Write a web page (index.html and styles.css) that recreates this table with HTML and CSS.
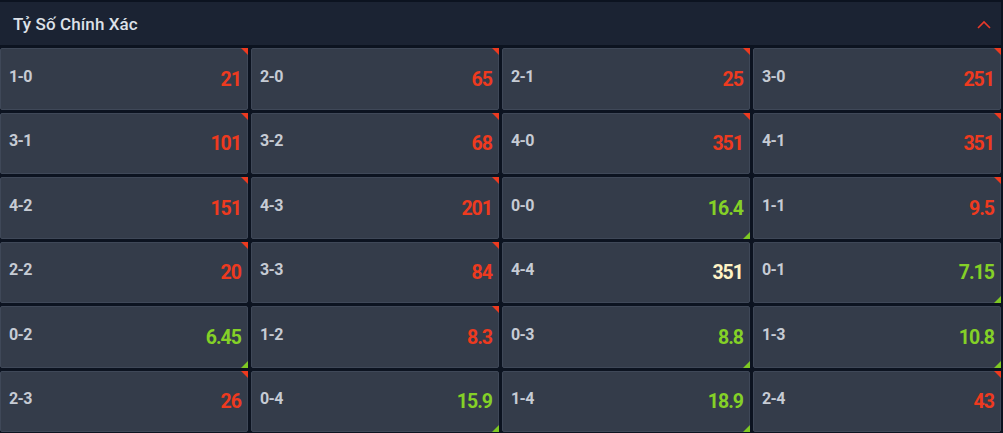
FILE: index.html
```html
<!DOCTYPE html>
<html lang="vi">
<head>
<meta charset="utf-8">
<title>Tỷ Số Chính Xác</title>
<link rel="stylesheet" href="styles.css">
</head>
<body>
<section class="panel">
  <header class="panel-head">
    <span class="panel-title">Tỷ Số Chính Xác</span>
    <svg class="chev" width="14" height="9" viewBox="0 0 14 9"><path d="M1 8 L7 2 L13 8" fill="none" stroke="#e8392a" stroke-width="1.6"/></svg>
  </header>
  <div class="grid">
    <div class="cell up"><span class="lbl">1-0</span><span class="val red">21</span></div>
    <div class="cell up"><span class="lbl">2-0</span><span class="val red">65</span></div>
    <div class="cell up"><span class="lbl">2-1</span><span class="val red">25</span></div>
    <div class="cell up"><span class="lbl">3-0</span><span class="val red">251</span></div>

    <div class="cell up"><span class="lbl">3-1</span><span class="val red">101</span></div>
    <div class="cell up"><span class="lbl">3-2</span><span class="val red">68</span></div>
    <div class="cell up"><span class="lbl">4-0</span><span class="val red">351</span></div>
    <div class="cell up"><span class="lbl">4-1</span><span class="val red">351</span></div>

    <div class="cell up"><span class="lbl">4-2</span><span class="val red">151</span></div>
    <div class="cell up"><span class="lbl">4-3</span><span class="val red">201</span></div>
    <div class="cell down"><span class="lbl">0-0</span><span class="val green">16.4</span></div>
    <div class="cell up"><span class="lbl">1-1</span><span class="val red">9.5</span></div>

    <div class="cell up"><span class="lbl">2-2</span><span class="val red">20</span></div>
    <div class="cell up"><span class="lbl">3-3</span><span class="val red">84</span></div>
    <div class="cell"><span class="lbl">4-4</span><span class="val plain">351</span></div>
    <div class="cell down"><span class="lbl">0-1</span><span class="val green">7.15</span></div>

    <div class="cell down"><span class="lbl">0-2</span><span class="val green">6.45</span></div>
    <div class="cell up"><span class="lbl">1-2</span><span class="val red">8.3</span></div>
    <div class="cell down"><span class="lbl">0-3</span><span class="val green">8.8</span></div>
    <div class="cell down"><span class="lbl">1-3</span><span class="val green">10.8</span></div>

    <div class="cell up"><span class="lbl">2-3</span><span class="val red">26</span></div>
    <div class="cell down"><span class="lbl">0-4</span><span class="val green">15.9</span></div>
    <div class="cell down"><span class="lbl">1-4</span><span class="val green">18.9</span></div>
    <div class="cell up"><span class="lbl">2-4</span><span class="val red">43</span></div>
  </div>
</section>
</body>
</html>
```
FILE: styles.css
```css
* { box-sizing: border-box; }
html, body {
  margin: 0;
  padding: 0;
  background: #0c1320;
  font-family: Roboto, "Liberation Sans", Arial, sans-serif;
  overflow: hidden;
}
.panel {
  width: 1001px;
  padding-top: 2px;
}
.panel-head {
  height: 43px;
  background: #1b2333;
  display: flex;
  align-items: center;
  justify-content: space-between;
  padding: 0 10px 0 13px;
  margin-bottom: 3px;
}
.panel-title {
  color: #dde1e8;
  font-size: 17px;
  font-weight: 500;
  letter-spacing: 0.1px;
}
.chev { display: block; margin-top: 1px; }
.grid {
  display: grid;
  grid-template-columns: repeat(4, 1fr);
  grid-auto-rows: 61.5px;
  gap: 3px;
}
.cell {
  position: relative;
  background: #343c4a;
  border: 1px solid #3f4858;
  border-radius: 2px;
  display: flex;
  align-items: center;
  justify-content: space-between;
  padding: 0 6px 0 8px;
}
.lbl {
  color: #c6cbd4;
  font-size: 16px;
  font-weight: 700;
  letter-spacing: -0.6px;
  margin-top: -5px;
}
.val {
  font-size: 19.5px;
  font-weight: 700;
  letter-spacing: -1px;
  margin-top: 1px;
}
.red { color: #ee3a1f; }
.green { color: #84d127; }
.plain { color: #fff4c6; }
.cell.up::after,
.cell.down::after {
  content: "";
  position: absolute;
  right: -1px;
  width: 0;
  height: 0;
  border-left: 7px solid transparent;
}
.cell.up::after {
  top: -1px;
  border-top: 7px solid #ee3a1f;
}
.cell.down::after {
  bottom: -1px;
  border-bottom: 7px solid #7dc823;
}
```
